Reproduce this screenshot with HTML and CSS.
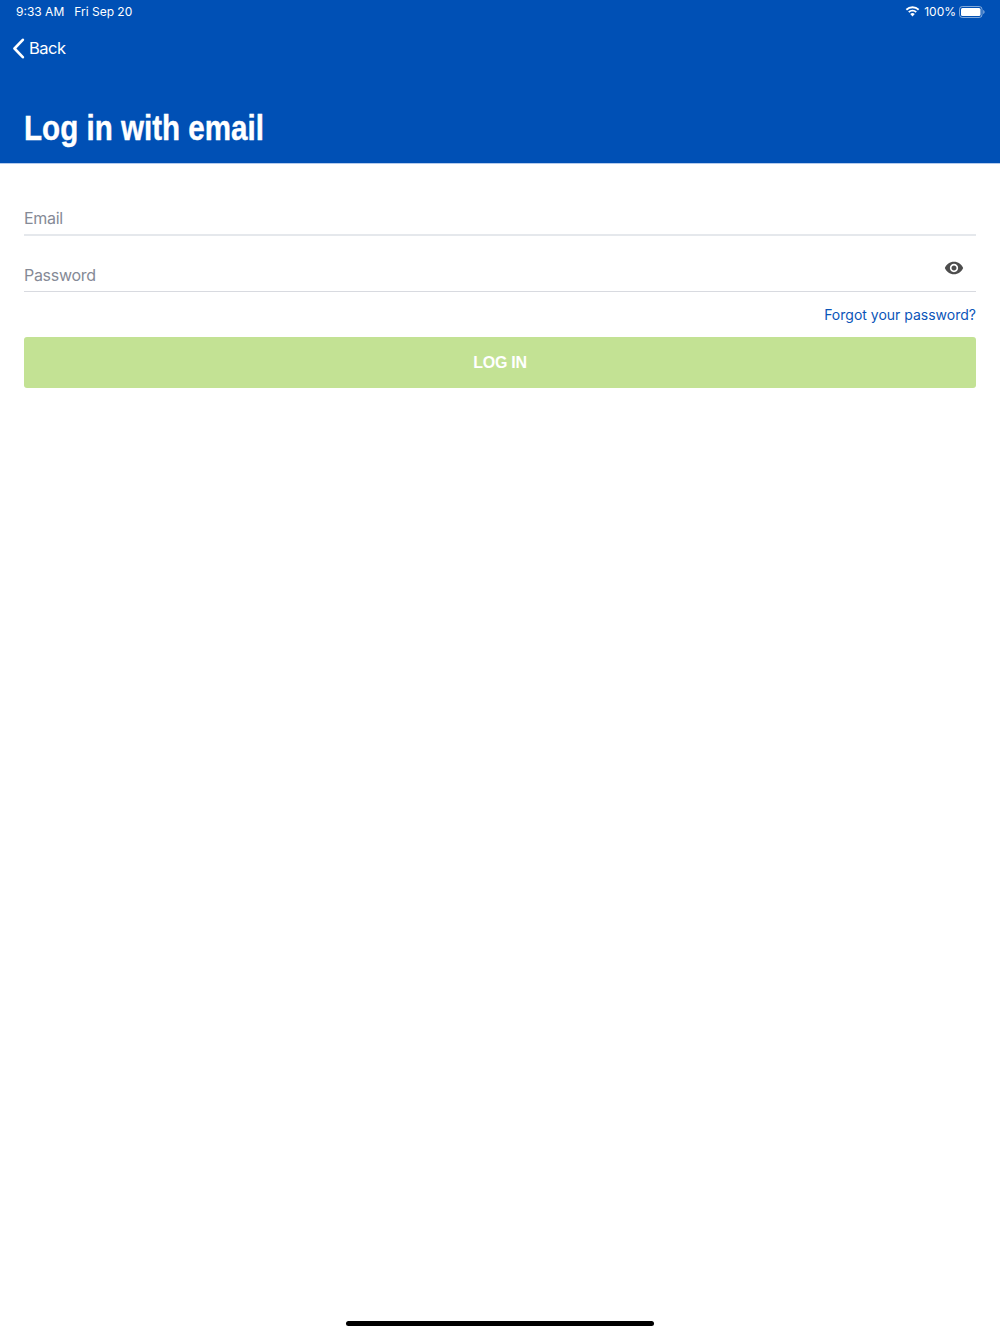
FILE: index.html
```html
<!DOCTYPE html>
<html lang="en">
<head>
<meta charset="utf-8">
<title>Log in with email</title>
<link rel="stylesheet" href="styles.css">
</head>
<body>
<div class="page">
  <header class="header">
    <div class="status">
      <div class="status-left"><span>9:33 AM</span><span>Fri Sep 20</span></div>
      <div class="status-right">
        <svg class="wifi" width="15" height="11" viewBox="0 0 15 11"><path d="M7.500 2.200c2.100 0 4 .8 5.500 2.200l1.300-1.400A9.800 9.800 0 0 0 7.500.2 9.800 9.800 0 0 0 .7 3l1.300 1.400a8 8 0 0 1 5.500-2.200zM7.500 5.600c1.200 0 2.300.5 3.100 1.200l1.300-1.400a6.400 6.400 0 0 0-8.800 0l1.300 1.400c.8-.7 1.900-1.200 3.100-1.200zM9.800 8.100 7.500 10.600 5.200 8.100a3.400 3.400 0 0 1 4.600 0z" fill="#fff"/></svg>
        <span>100%</span>
        <svg class="battery" width="26" height="12" viewBox="0 0 26 12"><rect x=".5" y=".5" width="22.500" height="11" rx="2.800" fill="none" stroke="#fff" stroke-opacity=".5"/><rect x="2" y="2" width="19.500" height="8" rx="1.500" fill="#fff"/><path d="M24.300 4v4c.7-.3 1.200-1 1.200-2s-.5-1.700-1.200-2z" fill="#fff" fill-opacity=".6"/></svg>
      </div>
    </div>
    <a class="back" href="#">
      <svg width="13" height="21" viewBox="0 0 13 21"><path d="M10.800 1.800 2.500 10.500l8.300 8.700" fill="none" stroke="#fff" stroke-width="2.600" stroke-linecap="round" stroke-linejoin="round"/></svg>
      <span>Back</span>
    </a>
    <h1 class="title">Log in with email</h1>
  </header>
  <main class="form">
    <div class="field field-email"><span class="placeholder">Email</span></div>
    <div class="field field-password">
      <span class="placeholder">Password</span>
      <svg class="eye" width="20" height="20" viewBox="0 0 24 24"><path d="M12 4.500C7 4.500 2.730 7.610 1 12c1.730 4.390 6 7.500 11 7.500s9.270-3.110 11-7.500c-1.730-4.390-6-7.500-11-7.500zM12 17c-2.760 0-5-2.240-5-5s2.240-5 5-5 5 2.240 5 5-2.240 5-5 5zm0-8c-1.660 0-3 1.340-3 3s1.340 3 3 3 3-1.340 3-3-1.340-3-3-3z" fill="#4d4d4d"/></svg>
    </div>
    <a class="forgot" href="#">Forgot your password?</a>
    <button class="login" type="button">LOG IN</button>
  </main>
  <div class="home-indicator"></div>
</div>
</body>
</html>
```
FILE: styles.css
```css
* { box-sizing: border-box; }
html, body { margin: 0; padding: 0; background: #fff; }
body { font-family: Inter, "Liberation Sans", sans-serif; }
.page { width: 1000px; height: 1334px; display: flex; flex-direction: column; }
.header { height: 164px; background: #0050b5; border-bottom: 1px solid #b4cbed; color: #fff; display: flex; flex-direction: column; }
.status { height: 23px; padding: 0 15px 0 16px; display: flex; justify-content: space-between; align-items: center; font-size: 12px; }
.status-left { display: flex; gap: 10px; }
.status-right { display: flex; align-items: center; gap: 4px; }
.battery { margin-left: -1px; }
.back { height: 50px; padding-left: 12px; display: flex; align-items: center; gap: 4px; color: #fff; text-decoration: none; font-size: 16.500px; letter-spacing: -.5px; }
.title { align-self: flex-start; margin: 33px 0 0 24px; font-family: "Liberation Sans", sans-serif; font-weight: 700; font-size: 35px; line-height: 44px; color: #fff; -webkit-text-stroke: .4px #fff; white-space: nowrap; transform: scaleX(.845); transform-origin: left center; }
.form { padding: 0 24px; display: flex; flex-direction: column; }
.field { position: relative; display: flex; align-items: flex-end; justify-content: space-between; border-bottom: 1px solid #d8dae0; color: #858a96; font-size: 16px; letter-spacing: -.3px; }
.field-email { height: 72px; padding-bottom: 6px; border-bottom: 2px solid #e5e8ec; }
.field-password { height: 56px; padding-bottom: 6px; }
.eye { position: absolute; right: 12px; top: 22px; }
.forgot { align-self: flex-end; margin-top: 14px; font-size: 14px; line-height: 18px; color: #0b55b8; text-decoration: none; }
.login { margin-top: 13px; height: 51px; border: 0; border-radius: 3px; background: #c3e294; color: #fff; font: 700 16px "Liberation Sans", sans-serif; letter-spacing: -.3px; }
.home-indicator { width: 308px; height: 5px; margin: auto auto 8px; background: #000; border-radius: 3px; }
```
